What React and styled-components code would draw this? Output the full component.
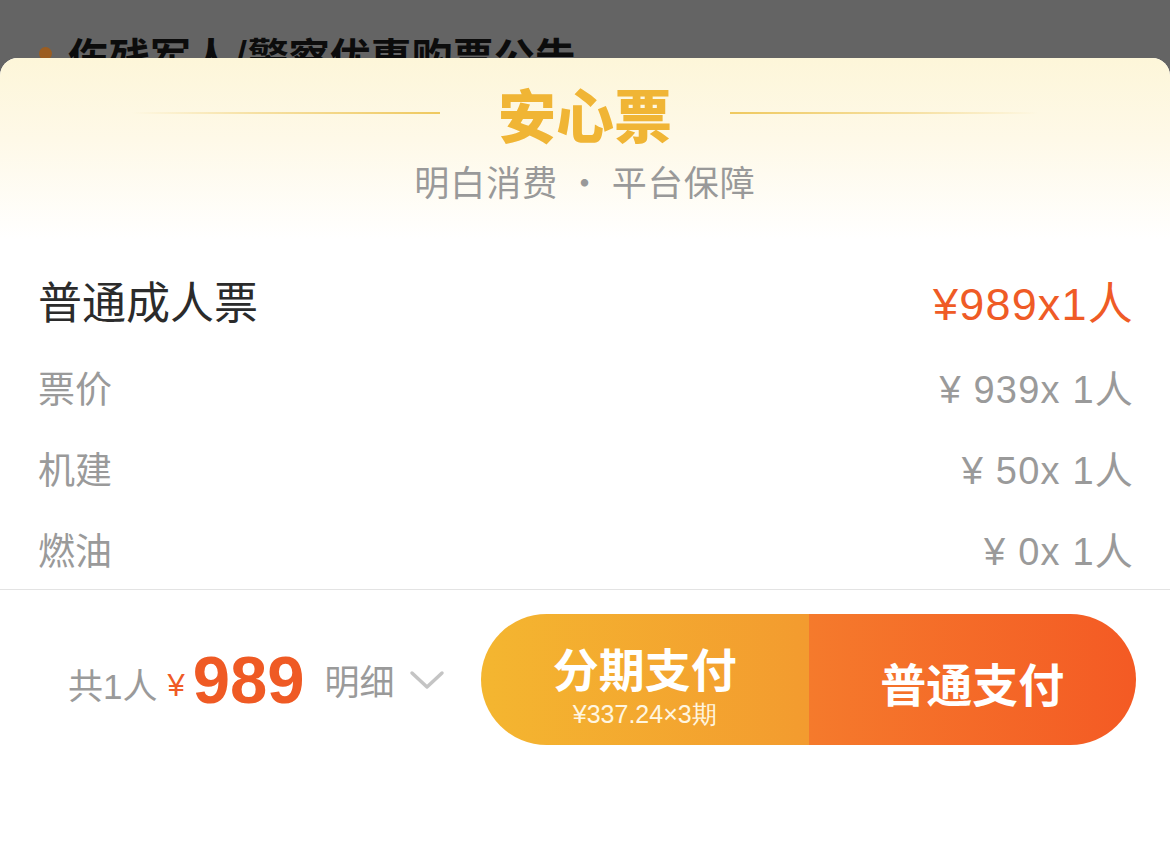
import React from "react";
import styled, { createGlobalStyle } from "styled-components";

const GlobalStyle = createGlobalStyle`
  html, body {
    margin: 0;
    padding: 0;
    background: #646464;
  }
  body {
    font-family: "Liberation Sans", "Noto Sans CJK SC", sans-serif;
  }
`;

const Screen = styled.div`
  width: 1170px;
  height: 868px;
  overflow: hidden;
  display: flex;
  flex-direction: column;
  background: #646464;
`;

const Notice = styled.div`
  height: 58px;
  overflow: hidden;
  display: flex;
  align-items: flex-start;
  gap: 16px;
  padding: 33px 0 0 39px;
  box-sizing: border-box;
`;

const NoticeDot = styled.span`
  flex: none;
  width: 13px;
  height: 13px;
  margin-top: 14px;
  border-radius: 50%;
  background: #9b5d21;
`;

const NoticeText = styled.span`
  font-family: "Noto Sans CJK SC", sans-serif;
  font-size: 41px;
  font-weight: 700;
  line-height: 44px;
  white-space: nowrap;
  color: #0c0c0c;
`;

const Sheet = styled.div`
  flex: 1;
  display: flex;
  flex-direction: column;
  background: #fff;
  border-radius: 18px 18px 0 0;
  overflow: hidden;
`;

const Header = styled.div`
  height: 182px;
  box-sizing: border-box;
  padding-top: 25px;
  display: flex;
  flex-direction: column;
  align-items: center;
  background: linear-gradient(180deg, #fdf6d9 0%, #fef9e8 45%, #ffffff 100%);
`;

const TitleRow = styled.div`
  display: flex;
  align-items: center;
  gap: 58px;
`;

const Line = styled.span`
  width: 308px;
  height: 2px;
  background: linear-gradient(
    ${(p) => (p.$flip ? "270deg" : "90deg")},
    rgba(240, 205, 110, 0) 0%,
    rgba(240, 205, 110, 0.55) 40%,
    #efc95f 100%
  );
`;

const Title = styled.h1`
  margin: 0;
  font-family: "Noto Sans CJK SC", sans-serif;
  font-size: 58px;
  font-weight: 900;
  line-height: 60px;
  color: #f0b535;
`;

const Subtitle = styled.div`
  margin-top: 16px;
  font-family: "Noto Sans CJK SC", sans-serif;
  font-size: 35px;
  line-height: 44px;
  color: #999;
  letter-spacing: 1px;
`;

const List = styled.div`
  display: flex;
  flex-direction: column;
  padding: 14px 36px 0 38px;
  border-bottom: 1.5px solid #e3e3e3;
`;

const Row = styled.div`
  height: ${(p) => (p.$main ? 92 : 81)}px;
  display: flex;
  align-items: center;
  justify-content: space-between;
`;

const Label = styled.span`
  font-family: "Noto Sans CJK SC", sans-serif;
  font-size: ${(p) => (p.$main ? 44 : 37)}px;
  color: ${(p) => (p.$main ? "#2b2b2b" : "#9a9a9a")};
`;

const Amount = styled.span`
  font-size: ${(p) => (p.$main ? 45 : 38)}px;
  color: ${(p) => (p.$main ? "#ef5b26" : "#9a9a9a")};
  letter-spacing: 1.2px;
  white-space: pre;
`;

const Footer = styled.div`
  display: flex;
  align-items: center;
  padding: 24px 34px 0 68px;
`;

const Total = styled.div`
  flex: 1;
  display: flex;
  align-items: center;
`;

const Count = styled.span`
  font-size: 35px;
  color: #9a9a9a;
  margin-top: 8px;
`;

const Yen = styled.span`
  font-size: 31px;
  color: #ef5b26;
  margin: 12px 8px 0 10px;
`;

const Price = styled.span`
  font-size: 67px;
  font-weight: 700;
  color: #ef5a24;
`;

const Detail = styled.span`
  font-family: "Noto Sans CJK SC", sans-serif;
  font-size: 35px;
  color: #9a9a9a;
  margin-left: 20px;
`;

const Chevron = styled.svg`
  width: 36px;
  height: 22px;
  margin: 0 0 0 14px;
`;

const PayGroup = styled.div`
  width: 655px;
  height: 131px;
  display: flex;
  border-radius: 66px;
  overflow: hidden;
`;

const PayButton = styled.button`
  flex: 1;
  border: 0;
  padding: 0;
  display: flex;
  flex-direction: column;
  align-items: center;
  justify-content: center;
  color: #fff;
  cursor: pointer;
  background: ${(p) =>
    p.$split
      ? "linear-gradient(90deg, #f4b630 0%, #f39b2f 100%)"
      : "linear-gradient(90deg, #f57a2c 0%, #f45a24 100%)"};
`;

const PayText = styled.span`
  font-family: "Noto Sans CJK SC", sans-serif;
  font-size: 46px;
  font-weight: 700;
  line-height: 52px;
  margin-top: ${(p) => (p.$split ? 10 : 4)}px;
`;

const PaySub = styled.span`
  margin-top: 7px;
  font-size: 25px;
  line-height: 28px;
  color: #fff6e0;
`;

const rows = [
  { label: "票价", amount: "¥ 939x 1人" },
  { label: "机建", amount: "¥ 50x 1人" },
  { label: "燃油", amount: "¥ 0x 1人" },
];

export default function App() {
  return (
    <>
      <GlobalStyle />
      <Screen>
        <Notice>
          <NoticeDot />
          <NoticeText>伤残军人/警察优惠购票公告</NoticeText>
        </Notice>
        <Sheet>
          <Header>
            <TitleRow>
              <Line />
              <Title>安心票</Title>
              <Line $flip />
            </TitleRow>
            <Subtitle>明白消费 · 平台保障</Subtitle>
          </Header>

          <List>
            <Row $main>
              <Label $main>普通成人票</Label>
              <Amount $main>¥989x1人</Amount>
            </Row>
            {rows.map((r) => (
              <Row key={r.label}>
                <Label>{r.label}</Label>
                <Amount>{r.amount}</Amount>
              </Row>
            ))}
          </List>

          <Footer>
            <Total>
              <Count>共1人</Count>
              <Yen>¥</Yen>
              <Price>989</Price>
              <Detail>明细</Detail>
              <Chevron viewBox="0 0 36 22">
                <path
                  d="M3 4 L18 18 L33 4"
                  fill="none"
                  stroke="#c4c4c4"
                  strokeWidth="3.5"
                  strokeLinecap="round"
                  strokeLinejoin="round"
                />
              </Chevron>
            </Total>
            <PayGroup>
              <PayButton $split>
                <PayText $split>分期支付</PayText>
                <PaySub>¥337.24×3期</PaySub>
              </PayButton>
              <PayButton>
                <PayText>普通支付</PayText>
              </PayButton>
            </PayGroup>
          </Footer>
        </Sheet>
      </Screen>
    </>
  );
}
